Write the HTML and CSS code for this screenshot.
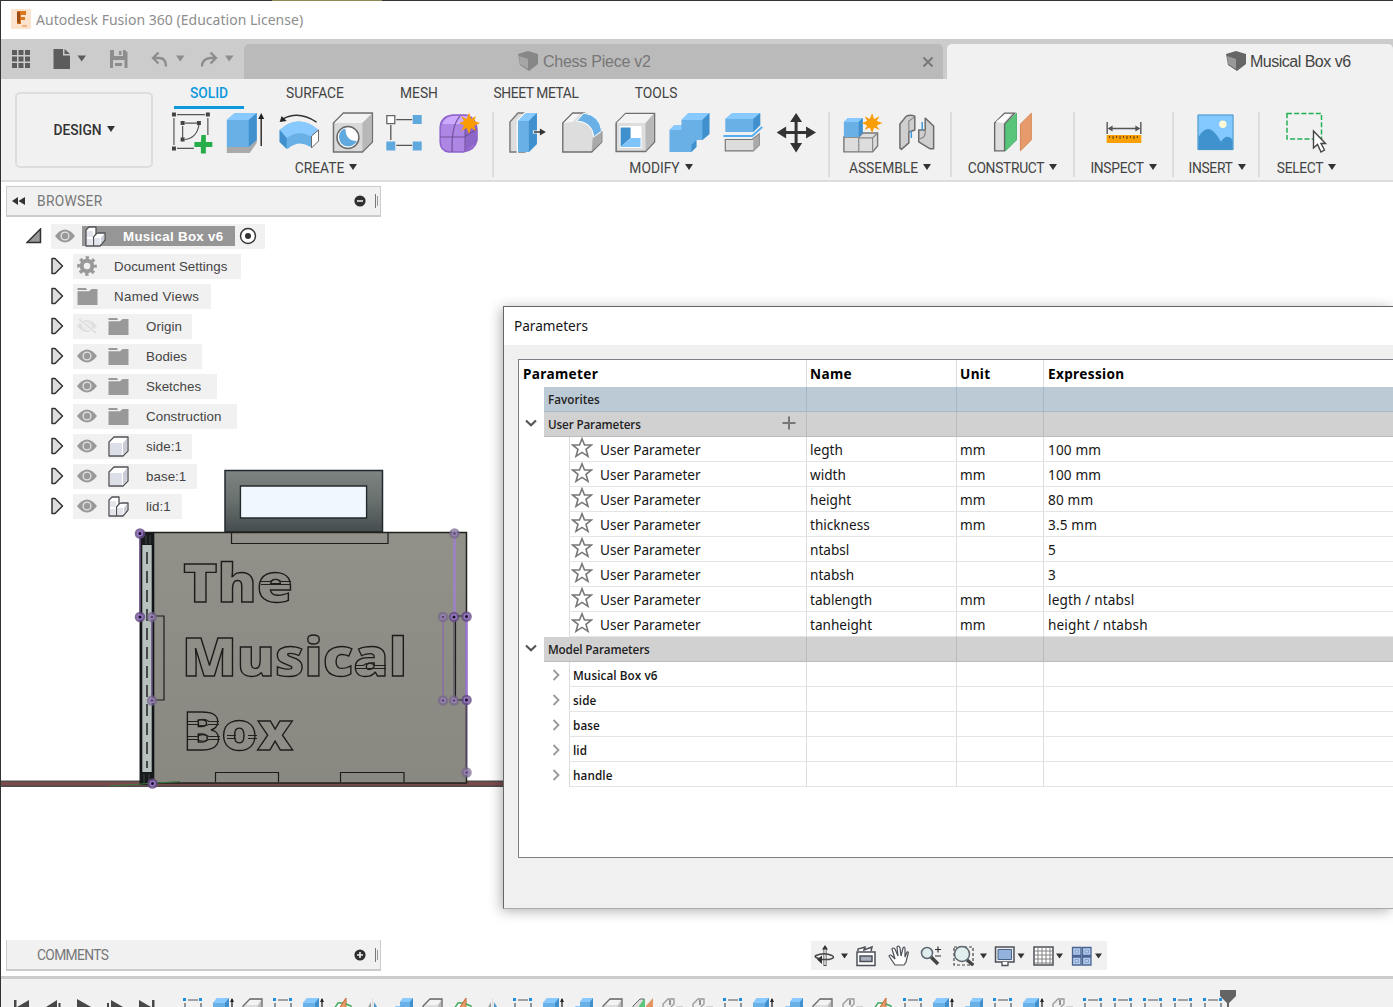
FILE: index.html
```html
<!DOCTYPE html>
<html lang="en">
<head>
<meta charset="utf-8">
<title>Autodesk Fusion 360 (Education License)</title>
<link rel="stylesheet" href="styles.css">
</head>
<body>
<svg class="defs" width="0" height="0" aria-hidden="true">
  <symbol id="eye" viewBox="0 0 20 14"><path d="M0 7Q10-6 20 7Q10 20 0 7Z" fill="#999"/><circle cx="10" cy="7" r="3.900" fill="none" stroke="#e4e4e4" stroke-width="1.300"/></symbol>
  <symbol id="eye-off" viewBox="0 0 20 16"><path d="M0 8Q10-4 20 8Q10 20 0 8Z" fill="#dedede"/><circle cx="10" cy="8" r="3.600" fill="none" stroke="#f2f2f2" stroke-width="1.400"/><path d="M1 1L19 15" stroke="#f2f2f2" stroke-width="4"/><path d="M2 1L19 15" stroke="#dedede" stroke-width="1.800"/></symbol>
  <symbol id="folder" viewBox="0 0 21 17"><path d="M.5 0H9l1 2H.5ZM.5 3.300H12L14.500 1H20.500V17H.5Z" fill="#999"/></symbol>
  <symbol id="box" viewBox="0 0 21 21"><path d="M1 6L6 1H20V15L15 20H1Z" fill="#fff" stroke="#505055" stroke-width="1.300" stroke-linejoin="round"/><path d="M2 7H14V19H2Z" fill="#dcdfe8"/><path d="M15 7L19 2V14L15 19Z" fill="#c9ccd6"/></symbol>
  <symbol id="boxes" viewBox="0 0 21 21"><path d="M1 4L4 1H11V8L13 7H20V14L15 20H1Z" fill="#fff" stroke="#505055" stroke-width="1.300" stroke-linejoin="round"/><path d="M2 5H8V11H2ZM2 13H7V19H2ZM9 12H15V19H9Z" fill="#e3e5ec"/><path d="M8.500 20V11L11 8" fill="none" stroke="#505055" stroke-width="1.200"/><path d="M16 12L19 8V14L16 18Z" fill="#c9ccd6"/></symbol>
  <symbol id="expand" viewBox="0 0 13 18"><path d="M1 1.500H4L11.500 9L4 16.500H1Z" fill="#dedede" stroke="#333" stroke-width="1.500" stroke-linejoin="round"/></symbol>
  <symbol id="caret" viewBox="0 0 8 6"><path d="M0 0H8L4 6Z" fill="currentColor"/></symbol>
  <symbol id="star" viewBox="0 0 22 21"><path d="M11 1.800L13.500 8H20.300L15 12.300L17 19.300L11 15.400L5 19.300L7 12.300L1.700 8H8.500Z" fill="#fff" stroke="#777" stroke-width="1.600"/></symbol>
  <symbol id="down" viewBox="0 0 12 8"><path d="M1 1.500L6 6.200L11 1.500" fill="none" stroke="#555" stroke-width="2.200"/></symbol>
  <symbol id="right" viewBox="0 0 8 12"><path d="M1.500 1L6.500 6L1.500 11" fill="none" stroke="#999" stroke-width="1.800"/></symbol>
  <symbol id="cube" viewBox="0 0 20 20"><path d="M0 3L10 0L20 3V13L11 20L2 14Z" fill="#666"/><path d="M1 5L10 8V18L2 13Z" fill="#999"/></symbol>
  <symbol id="t-sketch" viewBox="0 0 22 22"><path d="M6 3H16M3 6V20M19 6V20" stroke="#555" stroke-width="1.200"/><path d="M1 1H4V4H1ZM17 1H20V4H17Z" fill="#1d8de0"/></symbol>
  <symbol id="t-extrude" viewBox="0 0 22 22"><path d="M1 6L5 1H17V18L13 22H1Z" fill="#68b0e6"/><path d="M1 6L5 1H17L13 6Z" fill="#88caff"/><path d="M13 6L17 1V20L13 22Z" fill="#3f90cd"/><path d="M20 2V16" stroke="#222" stroke-width="1.300"/><path d="M18 5L20 1L22 5Z" fill="#222"/></symbol>
  <symbol id="t-fillet" viewBox="0 0 22 22"><path d="M1 22V9L8 2H20V22Z" fill="#ddd" stroke="#666" stroke-width="1.300"/><path d="M8 3H19L16 8H4Z" fill="#f3f3f3"/><path d="M16 8L19 4V22H16Z" fill="#bbb"/></symbol>
  <symbol id="t-combine" viewBox="0 0 22 22"><path d="M1 13L4 9H8V5L11 1H21V15L17 19H1Z" fill="#68b0e6"/><path d="M8 5L11 1H21L18 5ZM1 13L4 9H8V13Z" fill="#88caff"/><path d="M18 5L21 1V15L18 18Z" fill="#3f90cd"/></symbol>
  <symbol id="t-plane" viewBox="0 0 22 22"><path d="M0 15L6 6H13L7 19Z" fill="#fff" stroke="#3aa85c" stroke-width="1.400"/><path d="M8 10L14 1V11L8 20Z" fill="#e79a6c" stroke="#c66b33"/><path d="M14 7L19 9L20 19H14" fill="none" stroke="#3aa85c" stroke-width="1.400"/></symbol>
  <symbol id="t-mirror" viewBox="0 0 22 22"><path d="M1 19L9 5V19Z" fill="#999"/><path d="M12 5L21 19H12Z" fill="#4a98d1"/><path d="M10.500 1V20" stroke="#ddd"/></symbol>
  <symbol id="t-planes" viewBox="0 0 22 22"><path d="M1 20V9L8 2H12V20Z" fill="#ddd" stroke="#666"/><path d="M7 9L13 1V19H7Z" fill="#58c57b"/><path d="M14 9L21 1V19H14Z" fill="#e39563"/></symbol>
  <symbol id="t-joint" viewBox="0 0 22 22"><path d="M1 19V7L6 2H12V7L8 11V19Z" fill="#eee" stroke="#999" stroke-width="1.300"/><path d="M8 3V8M14 10.500H21" stroke="#777" stroke-width="1.500"/></symbol>
</svg>

<header class="titlebar">
  <svg class="app-logo" viewBox="0 0 20 20"><path fill="#fbe3cd" d="M0 0H20V20H0Z"/><path fill="#d9781e" d="M6 2H15V6H10V8H14V11H10V15H6Z"/><path fill="#9b4c14" d="M6 3H9V15L6 13Z"/><path fill="#f1b47e" d="M11 16H16V18H11Z"/></svg>
  <span class="app-title">Autodesk Fusion 360 (Education License)</span>
</header>

<nav class="quickbar">
  <svg class="quick-icons" viewBox="0 39 243 40">
    <g fill="#5c5c5c"><path d="M12 50h5v5h-5zM18.500 50h5v5h-5zM25 50h5v5h-5zM12 56.500h5v5h-5zM18.500 56.500h5v5h-5zM25 56.500h5v5h-5zM12 63h5v5h-5zM18.500 63h5v5h-5zM25 63h5v5h-5z"/><path d="M53.500 49H63V55.500H70V69H53.500ZM64.500 49L70 54H64.500Z"/><path d="M77.500 55.500H86L81.700 61.500Z"/></g>
    <g fill="#8d8d8d"><path d="M110 50H125L127.500 52.500V68H110Z"/><path d="M176 55.500H184.500L180.200 61.500ZM225 55.500H233.500L229.200 61.500Z"/></g>
    <path d="M114 50H123V56H114ZM113 60H124.500V68H113Z" fill="#ccc"/><path d="M119 51H121.500V55H119ZM115 63H122V66H115Z" fill="#8d8d8d"/>
    <g fill="none" stroke="#8d8d8d" stroke-width="2.300"><path d="M158.500 52.500L153 58L158.500 63.500M153 58H159Q166 58 166 66.500"/><path d="M210.500 52.500L216 58L210.500 63.500M216 58H210Q202 59 202 66.500"/></g>
  </svg>
  <div class="tab tab-idle"><svg class="tab-cube"><use href="#cube"/></svg><span class="tab-name">Chess Piece v2</span>
    <svg class="tab-close" viewBox="0 0 12 12"><path d="M1.500 1.500L10.500 10.500M10.500 1.500L1.500 10.500" stroke="#777" stroke-width="1.800"/></svg></div>
  <div class="tab tab-active"><svg class="tab-cube"><use href="#cube"/></svg><span class="tab-name">Musical Box v6</span></div>
</nav>

<section class="ribbon">
  <button class="workspace">DESIGN<svg class="caret"><use href="#caret"/></svg></button>
  <div class="ribbon-main">
    <div class="ribbon-tabs">
      <span class="rtab rtab-on">SOLID</span><span class="rtab w-surface">SURFACE</span><span class="rtab w-mesh">MESH</span><span class="rtab w-sheet">SHEET METAL</span><span class="rtab w-tools">TOOLS</span>
    </div>
    <div class="groups">
      <div class="group g-create">
        <svg class="icons" viewBox="160 109 333 48">
          <g stroke="#555" stroke-width="1.200" fill="none"><path d="M177 114.500H205M174 118V145M177 148.500H194M208 118V135M185 123H197M182.700 126V138M199 125Q197 138 185 139.500"/></g>
          <path fill="#444" d="M172 112.500h4v4h-4zM206 112.500h4v4h-4zM172 146.500h4v4h-4zM180.700 121h4v4h-4zM197 121h4v4h-4zM180.700 137.500h4v4h-4z"/>
          <path d="M201.500 135h4.500v7h6.500v5h-6.500v6.500h-5v-6.500h-6.500v-5h6.500z" fill="#28ad4b"/>
          <path d="M227 147H249L257 138V143L250 153H227Z" fill="#aaa"/><path d="M227 120L235 113H257V140L249 147H227Z" fill="#68b0e6"/><path d="M227 120L235 113H257L249 120Z" fill="#88caff"/><path d="M249 120L257 113V140L249 147Z" fill="#3f90cd"/><path d="M261.500 118V146" stroke="#222" stroke-width="1.400"/><path d="M258.500 119L261.500 113L264.500 119Z" fill="#222"/>
          <path d="M280 130Q299 113 319 130L311 147Q299 139 288 149L280 142Z" fill="#68b0e6"/><path d="M280 130Q299 113 319 130L312 137Q299 129 287 138Z" fill="#88caff"/><path d="M280 130L287 138V149L280 142Z" fill="#3f90cd"/><path d="M312 136L319 130V141L312 148Z" fill="#fff" stroke="#666"/><path d="M283 119Q299 110 317 122" fill="none" stroke="#333" stroke-width="1.500"/><path d="M280 122L282 116L287 121Z" fill="#222"/>
          <path d="M334 123L344 113H373V142L363 152H334Z" fill="#d9d9d9" stroke="#707070" stroke-width="1.500"/><path d="M335 123L344 114H372L363 123Z" fill="#f3f3f3"/><path d="M363 123L372 114V142L363 151Z" fill="#b8b8b8"/><circle cx="348.500" cy="137.500" r="11" fill="#fff" stroke="#666" stroke-width="1.500"/><path d="M346 128.500Q340 130 339.500 137Q340 146 349 146.500Q355 146 357.500 141Q346 141 346 128.500Z" fill="#5fa9df"/>
          <path d="M397 119.500H413M397 145.500H413M391.500 125V140" stroke="#555" stroke-width="1.300"/><path d="M387.500 115.500h8v8h-8z" fill="#fff" stroke="#666" stroke-width="1.300"/><path d="M413.500 115h9v9h-9zM413.500 141.500h9v9h-9zM387 141.500h9v9h-9z" fill="#5fa9df"/>
          <path d="M441 127Q442 116 454 115H467Q478 118 478 132V140Q476 150 464 152H450Q441 151 441 142Z" fill="#ae86e4" stroke="#8d62ca" stroke-width="1.500"/><path d="M443 124Q447 115 457 116H472L464 124Z" fill="#cda9ff"/><path d="M466 128L478 123V142L467 151Z" fill="#8e65c8"/><path d="M453 152Q452 125 461 116M441 137H465L478 129M466 151V124" fill="none" stroke="#72519c" stroke-width="1.200"/><path d="M470 112.500L472 119L477 116L475 121L481 123L475 126L477 131L472 128L470 134L467.500 128L462 131L465 125.500L460 123L465 121L462 116L467.500 119Z" fill="#f99d06"/>
        </svg><span class="glabel">CREATE<svg class="caret"><use href="#caret"/></svg></span>
      </div>
      <div class="group g-modify">
        <svg class="icons" viewBox="494 109 335 48">
          <path d="M510 152V122L518 113H525V152Z" fill="#ddd" stroke="#777" stroke-width="1.400"/><path d="M517.500 153V121L526 112" fill="none" stroke="#fff" stroke-width="1.500"/><path d="M518 121L526 113H537V144L529 152H518Z" fill="#68b0e6"/><path d="M518 121L526 113H537L529 121Z" fill="#88caff"/><path d="M529 121L537 113V144L529 152Z" fill="#3f90cd"/><path d="M533 132H541" stroke="#fff" stroke-width="3"/><path d="M534 132H542" stroke="#333" stroke-width="1.500"/><path d="M540 128.500L546 132L540 135.500Z" fill="#333"/>
          <path d="M563 152V123L573 113H585Q599 118 602 132V142L592 152Z" fill="#ddd" stroke="#707070" stroke-width="1.400"/><path d="M564 123L573 114H580L573 122Z" fill="#f5f5f5"/><path d="M577 121L584 113Q600 115 602 131L594 137Q593 122 577 121Z" fill="#68b0e6" stroke="#fff" stroke-width="1"/><path d="M593 138L602 132V142L592 151Z" fill="#aaa"/>
          <path d="M616.500 123L626 113.500H655V142L646 151.500H616.500Z" fill="#ddd" stroke="#707070" stroke-width="1.500"/><path d="M617 123L626 114H654L646 123Z" fill="#f3f3f3"/><path d="M646 123L654 114V142L646 151Z" fill="#b8b8b8"/><path d="M620 126H642V148H620Z" fill="#fff"/><path d="M621 127.500H631V138L621 147Z" fill="#3f90cd"/><path d="M631 138H641V147H621Z" fill="#7fc5fb"/>
          <path d="M670 130L675 125H682V120L689 113H710V134L703 140H697V147L692 152H670Z" fill="#68b0e6"/><path d="M682 120L689 113H710L703 120ZM670 130L675 125H682V130Z" fill="#88caff"/><path d="M703 120L710 113V134L703 140ZM692 145L697 140V147L692 152Z" fill="#3f90cd"/>
          <path d="M726 119L733 113H761V125L754 132H726Z" fill="#68b0e6"/><path d="M726 119L733 113H761L754 119Z" fill="#88caff"/><path d="M754 119L761 113V125L754 132Z" fill="#3f90cd"/><path d="M724 136H753L763 127" fill="none" stroke="#55aeee" stroke-width="2"/><path d="M726 139.500H753L760 134V145L754 151H726Z" fill="#ddd" stroke="#777" stroke-width="1.200"/><path d="M754 140L760 134V145L754 151Z" fill="#aaa"/>
          <path d="M797 118V147M783 132.500H811" stroke="#333" stroke-width="3"/><path d="M791 122L797 113L803 122ZM791 143L797 152.500L803 143ZM787 126.500L777.500 132.500L787 138.500ZM807 126.500L817 132.500L807 138.500Z" fill="#333"/>
        </svg><span class="glabel">MODIFY<svg class="caret"><use href="#caret"/></svg></span>
      </div>
      <div class="group g-assemble">
        <svg class="icons" viewBox="830 109 121 48">
          <path d="M845 137H860L864 133H879V146L874 152H845Z" fill="#ddd" stroke="#777" stroke-width="1.400"/><path d="M860 138V152M860 138H874L879 133M874 138V151" fill="none" stroke="#888" stroke-width="1.200"/><path d="M845 122L849 118H864V133L860 137H845Z" fill="#68b0e6"/><path d="M845 122L849 118H864L860 122Z" fill="#88caff"/><path d="M860 122L864 118V133L860 137Z" fill="#3f90cd"/>
          <path d="M873.500 113L875.500 119L881 116L878 121L884 123L878 125.500L881 130L875.500 127.500L873.500 133L871 127.500L866 130L868.500 125.500L863 123L868.500 121L866 116L871 119Z" fill="#f99d06"/>
          <path d="M901.500 124L908 116Q912 114 916.500 116V130L910.500 132V143L903 149.500L901.500 148Z" fill="#cfcfcf" stroke="#6c6c6c" stroke-width="1.500" stroke-linejoin="round"/><path d="M910.500 131V121L916 117" fill="none" stroke="#888" stroke-width="1.200"/>
          <path d="M927 118L935.500 126V149H932L920.500 142V130H927Z" fill="#cfcfcf" stroke="#6c6c6c" stroke-width="1.500" stroke-linejoin="round"/><path d="M927 130Q928 138 921 139" fill="none" stroke="#888" stroke-width="1.200"/>
          <path d="M913 131V138M924 122V130" stroke="#3b9ade" stroke-width="1.500"/>
        </svg><span class="glabel">ASSEMBLE<svg class="caret"><use href="#caret"/></svg></span>
      </div>
      <div class="group g-construct">
        <svg class="icons" viewBox="952 109 122 48"><path d="M995 151V123L1005 113H1015L1005 124V151Z" fill="#ddd" stroke="#666" stroke-width="1.400"/><path d="M996 122L1005 114H1012L1004 123Z" fill="#fff"/><path d="M1006 124L1017 113V140L1006 151Z" fill="#58c57b" stroke="#38a85c" stroke-width=".8"/><path d="M1021 124L1032 113V140L1021 151Z" fill="#e79a6c" stroke="#cf7940" stroke-width=".8"/></svg>
        <span class="glabel">CONSTRUCT<svg class="caret"><use href="#caret"/></svg></span>
      </div>
      <div class="group g-inspect">
        <svg class="icons" viewBox="1075 109 98 48"><path d="M1107.500 122V134M1141.500 122V134M1110 128.500H1139" stroke="#555" stroke-width="1.400"/><path d="M1108 128.500L1113 125.500V131.500ZM1141 128.500L1136 125.500V131.500Z" fill="#555"/><path d="M1107 135H1142V143H1107Z" fill="#f9a004"/><path d="M1110 136v2M1113.500 136v3M1117 136v2M1120.500 136v3M1124 136v2M1127.500 136v3M1131 136v2M1134.500 136v3M1138 136v2" stroke="#644411" stroke-width="1.100"/></svg>
        <span class="glabel">INSPECT<svg class="caret"><use href="#caret"/></svg></span>
      </div>
      <div class="group g-insert">
        <svg class="icons" viewBox="1174 109 86 48"><path d="M1198.500 114.500H1234.500V150H1198.500Z" fill="#83c9ff" stroke="#438fc7"/><path d="M1199 137Q1204 129 1209 129Q1215 129 1222 142Q1228 133 1234 140V150H1199Z" fill="#3f92cd"/><circle cx="1224" cy="124" r="3.800" fill="#fffad5"/></svg>
        <span class="glabel">INSERT<svg class="caret"><use href="#caret"/></svg></span>
      </div>
      <div class="group g-select">
        <svg class="icons" viewBox="1261 109 90 48"><path d="M1287.500 113.500H1322V139H1287.500Z" fill="none" stroke="#24b055" stroke-width="1.500" stroke-dasharray="5 2.200"/><path d="M1314 131V148L1318 144.500L1321.500 152L1325 150L1321.500 143.500H1326Z" fill="#fff" stroke="#444" stroke-width="1.400"/></svg>
        <span class="glabel">SELECT<svg class="caret"><use href="#caret"/></svg></span>
      </div>
    </div>
  </div>
</section>

<main class="canvas">
  <svg class="scene" viewBox="0 182 1393 794">
    <defs>
      <linearGradient id="handle" x2="0" y2="1"><stop stop-color="#7d8481"/><stop offset=".5" stop-color="#68706e"/><stop offset="1" stop-color="#444c4e"/></linearGradient>
      <linearGradient id="wood" x2="0" y2="1"><stop stop-color="#919089"/><stop offset="1" stop-color="#8a8981"/></linearGradient>
      <g id="pt"><circle r="5.300" fill="#634b83" fill-opacity=".8"/><circle r="3" fill="#9876c8"/><circle r="1.500" fill="#161020"/></g>
      <g id="ptf"><circle r="5.300" fill="#76668b" fill-opacity=".7"/><circle r="2.700" fill="#9a83b8"/><circle r="1.300" fill="#564568"/></g>
    </defs>
    <path d="M0 780.500H503V787H0Z" fill="#514b4b"/><path d="M0 782H503V785.500H0Z" fill="#7b4a4d"/>
    <path d="M225 470.500H382.500V532H225ZM240.500 486H366.500V518H240.500Z" fill="url(#handle)" fill-rule="evenodd" stroke="#20292c" stroke-width="1.500"/><path d="M241.500 487H365.500V517H241.500Z" fill="#eff7ff"/>
    <path d="M140.500 532.500H466.500V783H140.500Z" fill="url(#wood)" stroke="#20201e" stroke-width="1.500"/>
    <path d="M231.500 533V543.500H388V533M154 616H164V700H154M215.500 782V772.500H278.500V782M340.500 782V772.500H404V782M466 616H455.500V700H466" fill="none" stroke="#1d1d1a" stroke-width="1.200"/>
    <path d="M140 532H154V785H140Z" fill="#b7c2bf"/><path d="M141 532V785M153 532V785" stroke="#111416" stroke-width="2.600"/><path d="M147 552V768" stroke="#222" stroke-width="1.500" stroke-dasharray="12 7"/><path d="M140 532H154V545H140ZM140 772H154V785H140Z" fill="#17191a"/><path d="M146 535V544M150 535V544M144 774V783M149 774V783" stroke="#4c5656" stroke-width=".7"/>
    <path d="M454.500 533V616" stroke="#9d83bd" stroke-width="3"/><path d="M443 616V700" stroke="#88769c" stroke-width="2"/><path d="M466.500 616V700" stroke="#9b78d2" stroke-width="2.500"/><path d="M466.500 700V772" stroke="#54416b" stroke-width="1.500"/><path d="M454 616V700" stroke="#51455f"/><path d="M140 533V616M152 616V700" stroke="#6d5689" stroke-width="1.400"/>
    <g class="engraving">
      <text x="183" y="602" textLength="110" lengthAdjust="spacingAndGlyphs">The</text>
      <text x="182" y="676" textLength="225" lengthAdjust="spacingAndGlyphs">Musical</text>
      <text x="183" y="750" textLength="110" lengthAdjust="spacingAndGlyphs">Box</text>
    </g>
    <g class="bridges"><path d="M261 581.500H270Q276 577 281 581.500H291M261 584.500H291M356 665.500H363Q369 661 375 665.500H386M356 668.500H386M188 721.500H197Q203 717 209 721.500H219M188 724.500H197Q203 727 209 724.500H219M188 736.500H197Q203 733 209 736.500H220M188 739.500H197Q203 743 209 739.500H220M227 735.500H236M248 735.500H257M227 738.500H236M248 738.500H257"/></g>
    <path d="M110 786L180 781.500" stroke="#3a7b3b" stroke-width="1.200"/>
    <use href="#pt" x="140" y="533.500"/><use href="#ptf" x="454.500" y="533.500"/><use href="#pt" x="140" y="617"/><use href="#ptf" x="152" y="617"/><use href="#ptf" x="443" y="617"/><use href="#pt" x="454" y="617"/><use href="#pt" x="466.500" y="616.500"/><use href="#ptf" x="152" y="700.500"/><use href="#ptf" x="443" y="700.500"/><use href="#ptf" x="454" y="700.500"/><use href="#pt" x="466.500" y="700"/><use href="#ptf" x="466.500" y="772.500"/><use href="#pt" x="152.500" y="783.500"/>
  </svg>

  <aside class="browser">
    <div class="panel-head"><svg class="rewind" viewBox="0 0 13 8"><path d="M6 0V8L0 4ZM13 0V8L6.500 4Z" fill="#333"/></svg><span class="panel-title">BROWSER</span>
      <svg class="panel-tools" viewBox="0 0 24 16"><circle cx="6" cy="8" r="5.600" fill="#2f2f2f"/><path d="M3 8H9" stroke="#eee" stroke-width="1.600"/><path d="M21.500 1V15" stroke="#777"/><path d="M23.500 3V13" stroke="#999"/></svg></div>
    <ul class="tree">
      <li class="row root"><svg class="root-arrow" viewBox="0 0 16 16"><path d="M1 14.500H14.500V1Z" fill="#999" stroke="#333" stroke-width="1.500"/></svg><div class="chip"><svg class="eye"><use href="#eye"/></svg><span class="root-name"><svg class="ico"><use href="#boxes"/></svg>Musical Box v6</span><svg class="radio" viewBox="0 0 18 18"><circle cx="9" cy="9" r="7.500" fill="#fff" stroke="#333" stroke-width="1.400"/><circle cx="9" cy="9" r="3" fill="#333"/></svg></div></li>
      <li class="row"><svg class="expand"><use href="#expand"/></svg><div class="chip c1"><svg class="gear" viewBox="0 0 20 20"><circle cx="10" cy="10" r="5.300" fill="none" stroke="#999" stroke-width="4"/><circle cx="10" cy="10" r="8.200" fill="none" stroke="#999" stroke-width="3.200" stroke-dasharray="3.300 3.140" stroke-dashoffset="1.600"/></svg><span class="lbl">Document Settings</span></div></li>
      <li class="row"><svg class="expand"><use href="#expand"/></svg><div class="chip c2"><svg class="fold"><use href="#folder"/></svg><span class="lbl spaced">Named Views</span></div></li>
      <li class="row"><svg class="expand"><use href="#expand"/></svg><div class="chip c3"><svg class="eye"><use href="#eye-off"/></svg><svg class="fold"><use href="#folder"/></svg><span class="lbl">Origin</span></div></li>
      <li class="row"><svg class="expand"><use href="#expand"/></svg><div class="chip c4"><svg class="eye"><use href="#eye"/></svg><svg class="fold"><use href="#folder"/></svg><span class="lbl">Bodies</span></div></li>
      <li class="row"><svg class="expand"><use href="#expand"/></svg><div class="chip c5"><svg class="eye"><use href="#eye"/></svg><svg class="fold"><use href="#folder"/></svg><span class="lbl">Sketches</span></div></li>
      <li class="row"><svg class="expand"><use href="#expand"/></svg><div class="chip c6"><svg class="eye"><use href="#eye"/></svg><svg class="fold"><use href="#folder"/></svg><span class="lbl">Construction</span></div></li>
      <li class="row"><svg class="expand"><use href="#expand"/></svg><div class="chip c3"><svg class="eye"><use href="#eye"/></svg><svg class="ico"><use href="#box"/></svg><span class="lbl">side:1</span></div></li>
      <li class="row"><svg class="expand"><use href="#expand"/></svg><div class="chip c7"><svg class="eye"><use href="#eye"/></svg><svg class="ico"><use href="#box"/></svg><span class="lbl">base:1</span></div></li>
      <li class="row"><svg class="expand"><use href="#expand"/></svg><div class="chip c8"><svg class="eye"><use href="#eye"/></svg><svg class="ico"><use href="#boxes"/></svg><span class="lbl">lid:1</span></div></li>
    </ul>
  </aside>

  <div class="canvas-foot">
    <div class="panel-head comments"><span class="panel-title">COMMENTS</span>
      <svg class="panel-tools" viewBox="0 0 24 16"><circle cx="6" cy="8" r="5.600" fill="#2f2f2f"/><path d="M3 8H9M6 5V11" stroke="#eee" stroke-width="1.600"/><path d="M21.500 1V15" stroke="#777"/><path d="M23.500 3V13" stroke="#999"/></svg></div>
    <svg class="navbar" viewBox="811 941 296 29">
      <path d="M811 941H1107V970H811Z" fill="#f1f1f1"/>
      <g fill="none" stroke="#444" stroke-width="1.400"><path d="M825 948V966" stroke-width="3"/><path d="M825 949V965" stroke="#fff"/><path d="M820 959Q813 957 816 955.500Q824 952 832 955.500Q836 958 829 959.500H820"/></g><path d="M822 949.500L825 945L828 949.500ZM822 955.500V964L817 959.500Z" fill="#333"/>
      <g fill="#fff" stroke="#4c5058" stroke-width="1.500"><path d="M857 952H875V965.500H857Z"/><path d="M860 956H872V961.500H860Z" fill="#aab0bd"/><path d="M858 951V949L865 947L864 950L872 947L871 951"/></g>
      <path d="M895 965L889 956Q890 954 892 956L895 959L892 949Q893 947 895 949L898 956L897 947Q899 945 900 948L901 956L903 948Q905 946 905 949V957L907 952Q909 951 908 954L906 962L904 965Z" fill="#fff" stroke="#4c5058" stroke-width="1.200"/>
      <path d="M931 957L938 964" stroke="#454545" stroke-width="3.500"/><circle cx="927" cy="953" r="5.500" fill="#e0eef0" stroke="#5c6670" stroke-width="1.500"/><path d="M935 949.500H941M938 946.500V952.500M935 956H941" stroke="#333" stroke-width="1.200"/>
      <path d="M954 947H973V965H954Z" fill="none" stroke="#444" stroke-width="1.200" stroke-dasharray="3 2"/><path d="M967 960L973 965" stroke="#454545" stroke-width="3.500"/><circle cx="962" cy="954" r="7.500" fill="#e0eeed" stroke="#5c6670" stroke-width="1.500"/>
      <path d="M995.500 947H1014V962H995.500Z" fill="#eee" stroke="#4c5058" stroke-width="1.500"/><path d="M998 949.500H1011.500V959.500H998Z" fill="#93b2dc" stroke="#496487"/><path d="M1002 962V965.500H1008V962" fill="#fff" stroke="#4c5058" stroke-width="1.300"/>
      <path d="M1034 947H1053V965H1034Z" fill="#fff" stroke="#4c5058" stroke-width="1.500"/><path d="M1038 947V965M1042 947V965M1046 947V965M1050 947V965M1034 951H1053M1034 955H1053M1034 959H1053M1034 963H1053" stroke="#777" stroke-width=".9"/>
      <g fill="#b4cbed" stroke="#4b6592" stroke-width="1.300"><path d="M1072.500 947.500H1081V955.500H1072.500ZM1082.500 947.500H1091V955.500H1082.500ZM1072.500 957H1081V965H1072.500ZM1082.500 957H1091V965H1082.500Z"/><path d="M1075 950H1078.500V953H1075ZM1085 950H1088.500V953H1085ZM1075 959.500H1078.500V962.500H1075ZM1085 959.500H1088.500V962.500H1085Z" fill="none" stroke="#7d99c4" stroke-width=".8"/></g>
      <path d="M841 953.500H848L844.500 958.500ZM980 953.500H987L983.500 958.500ZM1017.500 953.500H1024.500L1021 958.500ZM1056 953.500H1063L1059.500 958.500ZM1095 953.500H1102L1098.500 958.500Z" fill="#333"/>
    </svg>
  </div>

  <section class="dialog">
    <h2 class="dialog-title">Parameters</h2>
    <div class="dialog-body"><div class="table">
      <div class="tr th"><span>Parameter</span><span>Name</span><span>Unit</span><span>Expression</span></div>
      <div class="tr fav"><span class="grp">Favorites</span><span></span><span></span><span></span></div>
      <div class="tr sec"><span class="grp"><svg class="down"><use href="#down"/></svg>User Parameters<svg class="plus" viewBox="0 0 14 14"><path d="M7 .5V13.500M.5 7H13.500" stroke="#777" stroke-width="2"/></svg></span><span></span><span></span><span></span></div>
      <div class="tr item"><span><svg class="star"><use href="#star"/></svg>User Parameter</span><span>legth</span><span>mm</span><span>100 mm</span></div>
      <div class="tr item"><span><svg class="star"><use href="#star"/></svg>User Parameter</span><span>width</span><span>mm</span><span>100 mm</span></div>
      <div class="tr item"><span><svg class="star"><use href="#star"/></svg>User Parameter</span><span>height</span><span>mm</span><span>80 mm</span></div>
      <div class="tr item"><span><svg class="star"><use href="#star"/></svg>User Parameter</span><span>thickness</span><span>mm</span><span>3.5 mm</span></div>
      <div class="tr item"><span><svg class="star"><use href="#star"/></svg>User Parameter</span><span>ntabsl</span><span></span><span>5</span></div>
      <div class="tr item"><span><svg class="star"><use href="#star"/></svg>User Parameter</span><span>ntabsh</span><span></span><span>3</span></div>
      <div class="tr item"><span><svg class="star"><use href="#star"/></svg>User Parameter</span><span>tablength</span><span>mm</span><span>legth / ntabsl</span></div>
      <div class="tr item"><span><svg class="star"><use href="#star"/></svg>User Parameter</span><span>tanheight</span><span>mm</span><span>height / ntabsh</span></div>
      <div class="tr sec"><span class="grp"><svg class="down"><use href="#down"/></svg>Model Parameters</span><span></span><span></span><span></span></div>
      <div class="tr item sub"><span><svg class="right"><use href="#right"/></svg>Musical Box v6</span><span></span><span></span><span></span></div>
      <div class="tr item sub"><span><svg class="right"><use href="#right"/></svg>side</span><span></span><span></span><span></span></div>
      <div class="tr item sub"><span><svg class="right"><use href="#right"/></svg>base</span><span></span><span></span><span></span></div>
      <div class="tr item sub"><span><svg class="right"><use href="#right"/></svg>lid</span><span></span><span></span><span></span></div>
      <div class="tr item sub"><span><svg class="right"><use href="#right"/></svg>handle</span><span></span><span></span><span></span></div>
    </div></div>
  </section>
</main>

<footer class="timeline">
  <svg class="play" viewBox="0 979 182 28"><path d="M14 1000H16.500V1014H14ZM29 1000V1014L17 1007ZM57 1000V1014L46 1007ZM58.500 1003H60.500V1014H58.500ZM77 999L92 1007.500L77 1016ZM111 1000L123 1007L111 1014ZM107 1003H109V1014H107ZM139 1000L151 1007L139 1014ZM152 1000H154.500V1014H152Z" fill="#484848"/></svg>
  <svg class="step"><use href="#t-sketch"/></svg><svg class="step"><use href="#t-extrude"/></svg><svg class="step"><use href="#t-fillet"/></svg><svg class="step"><use href="#t-sketch"/></svg><svg class="step"><use href="#t-extrude"/></svg><svg class="step"><use href="#t-plane"/></svg><svg class="step"><use href="#t-mirror"/></svg><svg class="step"><use href="#t-combine"/></svg><svg class="step"><use href="#t-fillet"/></svg><svg class="step"><use href="#t-plane"/></svg><svg class="step"><use href="#t-mirror"/></svg><svg class="step"><use href="#t-sketch"/></svg><svg class="step"><use href="#t-extrude"/></svg><svg class="step"><use href="#t-combine"/></svg><svg class="step"><use href="#t-fillet"/></svg><svg class="step"><use href="#t-planes"/></svg><svg class="step"><use href="#t-joint"/></svg><svg class="step"><use href="#t-joint"/></svg><svg class="step"><use href="#t-sketch"/></svg><svg class="step"><use href="#t-extrude"/></svg><svg class="step"><use href="#t-combine"/></svg><svg class="step"><use href="#t-fillet"/></svg><svg class="step"><use href="#t-joint"/></svg><svg class="step"><use href="#t-plane"/></svg><svg class="step"><use href="#t-sketch"/></svg><svg class="step"><use href="#t-extrude"/></svg><svg class="step"><use href="#t-combine"/></svg><svg class="step"><use href="#t-sketch"/></svg><svg class="step"><use href="#t-extrude"/></svg><svg class="step"><use href="#t-joint"/></svg><svg class="step"><use href="#t-sketch"/></svg><svg class="step"><use href="#t-sketch"/></svg><svg class="step"><use href="#t-sketch"/></svg><svg class="step"><use href="#t-sketch"/></svg><svg class="step"><use href="#t-sketch"/></svg>
  <svg class="marker" viewBox="0 0 16 20"><path d="M0 0H16V6L9 13V20H7V13L0 6Z" fill="#646464"/></svg>
</footer>
</body>
</html>
```
FILE: styles.css
```css
* { box-sizing: border-box; }
svg { display: block; flex: none; }
body { margin: 0; width: 1393px; height: 1007px; overflow: hidden; display: flex; flex-direction: column; background: #fff; border-left: 1px solid #333; font-family: "Liberation Sans", Arial, sans-serif; font-size: 13.33px; color: #444; }
.defs { position: absolute; }

.titlebar { height: 39px; flex: none; display: flex; align-items: center; padding: 1px 0 0 10px; background: linear-gradient(90deg, #333 271px, #8d8b55 271px 381px, #333 381px) no-repeat 0 0 / 100% 1px, #fff; }
.app-logo { width: 20px; height: 20px; margin-top: -2px; }
.app-title { margin: -2px 0 0 5px; font: 14px "Noto Sans", sans-serif; letter-spacing: .02px; color: #8e8e8e; white-space: nowrap; }

.quickbar { height: 40px; flex: none; display: flex; align-items: flex-end; background: #ccc; }
.quick-icons { width: 243px; height: 40px; margin-left: -1px; }
.tab { height: 35px; padding-top: 1px; display: flex; align-items: center; font-size: 16px; letter-spacing: -.25px; white-space: nowrap; border-radius: 5px 5px 0 0; }
.tab-idle { width: 699px; margin-left: 1px; background: #bababa; color: #777; padding-left: 274px; }
.tab-idle .tab-cube { opacity: .6; }
.tab-cube { width: 20px; height: 20px; margin: -2px 5px 0 0; }
.tab-close { width: 12px; height: 12px; margin: 0 9px 0 auto; }
.tab-active { flex: 1; margin-left: 4px; background: #f1f1f1; color: #444; padding-left: 279px; letter-spacing: -.5px; }
.tab-active .tab-cube { margin-right: 4px; }

.ribbon { height: 103px; flex: none; display: flex; background: #f1f1f1; border-bottom: 2px solid #ddd; font-family: Roboto, sans-serif; }
.workspace { width: 138px; height: 76px; margin: 13px 0 0 14px; border: 2px solid #ddd; border-radius: 5px; background: #f1f1f1; display: flex; align-items: center; justify-content: center; font: 500 13.8px Roboto, sans-serif; color: #333; padding: 0; }
.caret { width: 8px; height: 6px; margin: -2px 0 0 5px; color: #333; }
.ribbon-main { margin-left: 7px; flex: 1; display: flex; flex-direction: column; }
.ribbon-tabs { height: 30px; display: flex; padding-left: 14px; font-size: 13.8px; }
.rtab { line-height: 28px; white-space: nowrap; text-align: center; }
.rtab-on { width: 70px; color: #0d99dc; font-weight: 500; border-bottom: 3px solid #0d99dc; }
.w-surface { width: 142px; }
.w-mesh { width: 66px; }
.w-sheet { width: 168px; letter-spacing: -.4px; }
.w-tools { width: 72px; }
.groups { display: flex; height: 68px; margin-top: 3px; }
.group { height: 65px; border-right: 2px solid #ddd; display: flex; flex-direction: column; }
.icons { width: 100%; height: 48px; margin-top: -3px; }
.glabel { display: flex; align-items: center; justify-content: center; font-size: 13.8px; height: 26px; margin-top: 2px; white-space: nowrap; }
.g-create { width: 334px; } .g-modify { width: 336px; } .g-assemble { width: 122px; } .g-construct { width: 123px; } .g-inspect { width: 99px; } .g-insert { width: 86px; } .g-select { width: 91px; border: 0; }
.g-construct .glabel, .g-inspect .glabel, .g-insert .glabel, .g-select .glabel { letter-spacing: -.3px; }
.g-insert .glabel, .g-select .glabel { padding-left: 2px; }
.g-assemble .icons { margin-left: -1px; }

.canvas { flex: 1; position: relative; display: flex; flex-direction: column; justify-content: space-between; background: #fff; min-height: 0; }
.scene { position: absolute; left: -1px; top: 0; width: 1393px; height: 794px; }
.engraving { font: 800 53px "Open Sans", Arial, sans-serif; fill: #8f8e86; stroke: #1b1b19; stroke-width: 1.3px; }
.bridges { fill: none; stroke: #20201e; stroke-width: 1.1px; }
.browser, .canvas-foot { position: relative; }
.browser { padding: 4px 0 0 5px; }
.panel-head { width: 375px; height: 31px; display: flex; align-items: center; background: #f1f1f1; border: 2px solid #ccc; border-width: 1px 1px 2px; color: #777; font: 13.8px Roboto, sans-serif; letter-spacing: .3px; }
.rewind { width: 13px; height: 8px; margin: 0 12px 0 5px; }
.panel-tools { width: 24px; height: 16px; margin: 0 2px 0 auto; }
.tree { list-style: none; margin: 4px 0 0; padding: 0; }
.row { height: 30px; display: flex; align-items: center; padding-left: 45px; }
.row.root { padding-left: 20px; }
.root-arrow { width: 16px; height: 16px; margin-right: 9px; }
.chip { height: 25px; background: #f1f1f1; display: flex; align-items: center; margin-left: 9px; padding-left: 4px; white-space: nowrap; }
.root .chip { margin-left: 0; width: 214px; }
.eye { width: 20px; height: 16px; margin-right: 11px; }
.root .eye { margin-right: 7px; }
.fold { width: 21px; height: 17px; }
.gear { width: 20px; height: 20px; margin-right: 1px; }
.ico { width: 21px; height: 21px; }
.lbl { margin-left: 17px; letter-spacing: .05px; }
.c1 .lbl, .c2 .lbl { margin-left: 16px; }
.lbl.spaced { letter-spacing: .3px; }
.root-name { height: 20px; width: 153px; background: #969696; color: #fff; font-weight: 700; letter-spacing: .3px; display: flex; align-items: center; padding-left: 3px; gap: 17px; }
.radio { width: 18px; height: 18px; margin-left: 4px; }
.expand { width: 13px; height: 18px; }
.c1 { width: 168px; } .c2 { width: 138px; } .c3 { width: 119px; } .c4 { width: 129px; } .c5 { width: 144px; } .c6 { width: 164px; } .c7 { width: 124px; } .c8 { width: 109px; }
.canvas-foot { display: flex; align-items: flex-end; padding: 0 0 5px 5px; }
.comments { padding-left: 30px; border-top-width: 0; letter-spacing: -.65px; }
.navbar { width: 296px; height: 29px; margin: 0 0 1px 430px; }

.dialog { position: absolute; left: 502px; top: 124px; right: 0; height: 603px; background: #f0f0f0; border: 1px solid #666; border-right: 0; border-bottom-color: #aaa; box-shadow: -2px 2px 12px rgba(0,0,0,.3); font-family: "Noto Sans", sans-serif; color: #151515; display: flex; flex-direction: column; }
.dialog-title { margin: 0; height: 38px; flex: none; background: #fff; font-weight: 400; font-size: 13.6px; line-height: 37px; padding-left: 10px; }
.dialog-body { padding: 14px 0 0 14px; }
.table { height: 499px; background: #fff; border: 1px solid #7b8087; border-right: 0; font-size: 13.6px; }
.tr { height: 25px; display: grid; grid-template-columns: 288px 150px 87px 1fr; }
.tr > span { display: flex; align-items: center; border-right: 1px solid #ddd; border-bottom: 1px solid #e4e4e4; padding-left: 3px; white-space: nowrap; }
.tr > span:last-child { padding-left: 4px; border-right: 0; letter-spacing: .15px; }
.th { height: 27px; color: #000; font-weight: 700; letter-spacing: .3px; }
.th > span:first-child { padding-left: 4px; }
.tr.th > span { border-bottom: 0; letter-spacing: .35px; }
.tr .grp { margin-left: 25px; padding-left: 4px; font: 600 11.7px "Open Sans", sans-serif; color: #222; }
.tr.sec .grp { padding-left: 3px; letter-spacing: -.15px; }
.fav > span { background: #bccad6; border-color: #a9b8c5; }
.sec > span { background: #d1d1d1; border-color: #bbb; }
.item > span:first-child { margin-left: 50px; padding-left: 2px; border-left: 1px solid #ddd; }
.star { width: 22px; height: 21px; margin: -3px 7px 0 -1px; }
.down { width: 12px; height: 8px; margin: -2px 11px 0 -22px; }
.plus { width: 14px; height: 14px; margin: -3px 10px 0 auto; }
.sub > span:first-child { font: 600 11.7px "Open Sans", sans-serif; letter-spacing: .1px; padding-top: 1px; }
.right { width: 8px; height: 12px; margin: 0 13px 0 -20px; }

.timeline { height: 31px; flex: none; display: flex; overflow: hidden; background: #f1f1f1; border-top: 3px solid #ccc; }
.play { width: 182px; height: 28px; margin-left: -1px; }
.step { width: 22px; height: 22px; margin: 18px 8px 0 0; }
.marker { width: 16px; height: 20px; margin: 11px 0 0 -12px; }
```
